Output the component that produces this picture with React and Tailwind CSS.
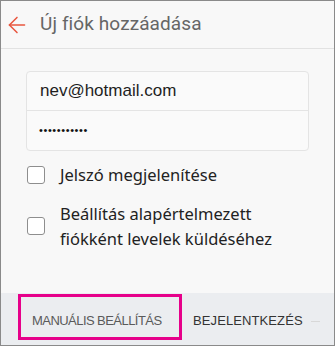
import { ArrowLeft } from 'lucide-react'

function Checkbox() {
  return <div className="w-[18px] h-[18px] shrink-0 rounded-[3px] border-[1.5px] border-[#8e8e8e] bg-white" />
}

export default function App() {
  return (
    <div className="w-[335px] h-[346px] border border-[#8a8a8a] bg-[#f8f8f8] flex flex-col overflow-hidden">
      {/* header */}
      <div className="h-[48px] shrink-0 flex items-center border-b border-[#e2e2e2]">
        <ArrowLeft size={26} strokeWidth={1.4} className="ml-[3px] text-[#e8553e]" />
        <span className="ml-[10px] text-[19px] text-[#666] font-['Roboto',sans-serif] tracking-[0.1px]">
          Új fiók hozzáadása
        </span>
      </div>

      {/* form */}
      <div className="flex-1 pt-[22px] pl-[25px] pr-[25px]">
        <div className="w-[283px] rounded-[4px] border border-[#e4e4e4] bg-[#fafafa]">
          <div className="h-[39px] flex items-center pl-[13px] border-b border-[#e4e4e4] text-[17px] text-[#1e1e1e] font-['Liberation_Sans',sans-serif]">
            nev@hotmail.com
          </div>
          <div className="h-[39px] flex items-center pl-[12px] text-[11px] text-[#111] tracking-[0.6px] font-['Liberation_Sans',sans-serif]">
            •••••••••••
          </div>
        </div>

        <div className="mt-[12px] flex items-center gap-[15px] pl-[1px] text-[16.5px] text-[#222] font-['Noto_Sans',sans-serif]">
          <Checkbox />
          <span>Jelszó megjelenítése</span>
        </div>

        <div className="mt-[13px] flex items-center gap-[15px] pl-[1px] text-[16.5px] leading-[25px] text-[#222] font-['Noto_Sans',sans-serif]">
          <Checkbox />
          <span>Beállítás alapértelmezett<br />fiókként levelek küldéséhez</span>
        </div>
      </div>

      {/* footer */}
      <div className="h-[52px] shrink-0 bg-[#ebedf0] flex items-start pl-[17px] pt-[1px] font-['Liberation_Sans',sans-serif] text-[13px]">
        <div className="w-[164px] h-[46px] border-[3px] border-[#e6008a] flex items-center pt-[8px] pl-[11px] text-[#5a5a5a] tracking-[-0.55px]">
          MANUÁLIS BEÁLLÍTÁS
        </div>
        <div className="h-[46px] flex items-center pt-[8px] ml-[11px] text-[#333] tracking-[0.1px]">
          BEJELENTKEZÉS
          <span className="ml-[8px] w-[9px] h-px bg-[#d8d8d8]" />
        </div>
      </div>
    </div>
  )
}
